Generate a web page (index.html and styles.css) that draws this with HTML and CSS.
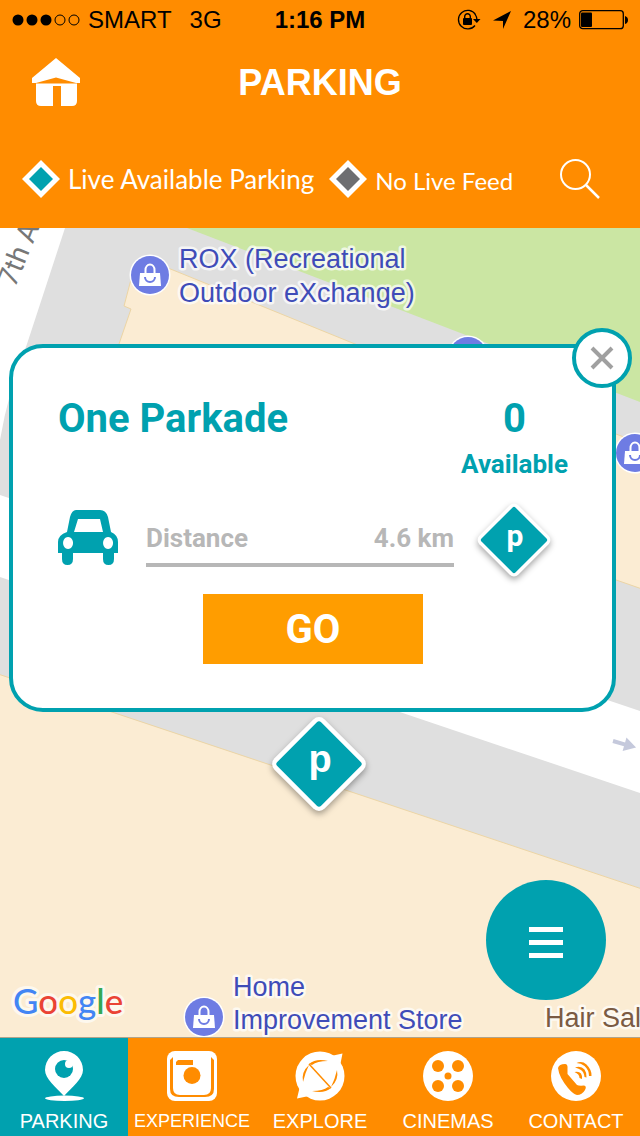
FILE: index.html
```
<!DOCTYPE html>
<html lang="en">
<head>
    <meta charset="UTF-8">
    <meta name="viewport" content="width=device-width, initial-scale=1.0">
    <title>Parking</title>
    <link rel="stylesheet" href="styles.css">
</head>
<body>

    <header class="app-header">
        <div class="status-bar">
            <div class="status-side">
                <svg class="signal" width="68" height="12" viewBox="0 0 68 12">
                    <circle cx="6" cy="6" r="5.500"/>
                    <circle cx="20" cy="6" r="5.500"/>
                    <circle cx="34" cy="6" r="5.500"/>
                    <circle class="signal-empty" cx="48" cy="6" r="5"/>
                    <circle class="signal-empty" cx="62" cy="6" r="5"/>
                </svg>
                <span class="carrier">SMART</span>
                <span>3G</span>
            </div>
            <span class="clock">1:16 PM</span>
            <div class="status-side status-right">
                <svg width="24" height="22" viewBox="0 0 24 22">
                    <path d="M18.500 5.500A9.300 9.300 0 1 0 18 16.500" fill="none" stroke="#000" stroke-width="1.300"/>
                    <path d="M18 5q2 3 2 6" fill="none" stroke="#000" stroke-width="1.300"/>
                    <path d="M16 10h7.500l-3.700 4z"/>
                    <rect x="6" y="9" width="9" height="7" rx="1"/>
                    <path d="M7.700 10V7.500a2.800 2.800 0 0 1 5.600 0V10" fill="none" stroke="#000" stroke-width="1.400"/>
                </svg>
                <svg width="18" height="18" viewBox="0 0 18 18">
                    <path d="M18 0L10 18V10L0 9.500z"/>
                </svg>
                <div class="battery">
                    <span>28%</span>
                    <svg width="49" height="20" viewBox="0 0 49 20">
                        <rect x=".7" y=".7" width="43.600" height="18" rx="3" fill="none" stroke="#000" stroke-width="1.300"/>
                        <rect x="2" y="2.500" width="11" height="14.500" rx="1"/>
                        <path d="M46 6q3 1 3 4t-3 4z"/>
                    </svg>
                </div>
            </div>
        </div>

        <div class="title-bar">
            <a class="home-link" href="#" aria-label="Home">
                <svg width="48" height="48" viewBox="0 0 48 48" fill="#fff">
                    <path d="M24 0L48 20V25H44L24 19.500L4 25H0V20z"/>
                    <path d="M4 25.500H45V43q0 5-5 5H29V28H21V48H9q-5 0-5-5z"/>
                </svg>
            </a>
            <h1 class="title">PARKING</h1>
        </div>

        <div class="legend">
            <div class="legend-item">
                <svg width="38" height="38" viewBox="0 0 38 38">
                    <path d="M19 0L38 19L19 38L0 19z" fill="#fff"/>
                    <path d="M19 7L31 19L19 31L7 19z" fill="#00a1af"/>
                </svg>
                <span>Live Available Parking</span>
            </div>
            <div class="legend-item">
                <svg width="38" height="38" viewBox="0 0 38 38">
                    <path d="M19 0L38 19L19 38L0 19z" fill="#fff"/>
                    <path d="M19 7L31 19L19 31L7 19z" fill="#6d6e71"/>
                </svg>
                <span class="legend-small">No Live Feed</span>
            </div>
            <button type="button" class="search-button" aria-label="Search">
                <svg width="40" height="40" viewBox="0 0 40 40" fill="none" stroke="#fff" stroke-width="2">
                    <circle cx="15.500" cy="15.500" r="14.500"/>
                    <path d="M26 26L39 39" stroke-width="2.500"/>
                </svg>
            </button>
        </div>
    </header>

    <main class="map">
        <svg class="map-canvas" viewBox="0 228 640 809" preserveAspectRatio="xMidYMid slice">
            <defs>
                <g id="shop">
                    <circle r="20.500" fill="#fff"/>
                    <circle r="19" fill="#6e7ce3"/>
                    <path d="M-10-2H10L11 11H-11z" fill="#fff"/>
                    <path d="M-4.500 0V-5a4.500 5.500 0 0 1 9 0V0" fill="none" stroke="#fff" stroke-width="2"/>
                    <path d="M-5 2a5 5 0 0 0 10 0" fill="none" stroke="#6e7ce3" stroke-width="2"/>
                </g>
            </defs>
            <rect y="228" width="640" height="809" fill="#dfdfdf"/>

            <!-- parks and buildings -->
            <path d="M187 228H640V402z" fill="#cbe6a3"/>
            <path class="building" d="M134 268L168 268L355 344L616 434L642 444V589L100 400L119 344L131 309L124 306z"/>
            <path class="building" d="M-2 674L642 889V1040H-2z"/>

            <!-- roads -->
            <path d="M0 228H65L27 344Q8 392 0 440z" fill="#fff"/>
            <path d="M0 495L640 711V793L0 577z" fill="#fff"/>
            <path d="M0-2H12V-7L24 0L12 7V2H0z" fill="#c5c9dc" transform="translate(613 741) rotate(16)"/>

            <text class="street" transform="translate(15 288) rotate(-68)">7th A</text>

            <use href="#shop" x="150" y="275"/>
            <use href="#shop" x="468" y="356"/>
            <use href="#shop" x="635" y="453"/>
            <use href="#shop" x="204" y="1017"/>
            <text class="place" x="179" y="268">ROX (Recreational</text>
            <text class="place" x="179" y="302">Outdoor eXchange)</text>
            <text class="place" x="233" y="996">Home</text>
            <text class="place" x="233" y="1029">Improvement Store</text>
            <text class="place place-brown" x="545" y="1027">Hair Sal</text>

            <text class="google" x="13" y="1014"><tspan fill="#4285f4">G</tspan><tspan fill="#ea4335">o</tspan><tspan fill="#fbbc05">o</tspan><tspan fill="#4285f4">g</tspan><tspan fill="#34a853">l</tspan><tspan fill="#ea4335">e</tspan></text>

            <g class="marker">
                <rect x="-35.500" y="-35.500" width="71" height="71" rx="8" fill="#fff" transform="translate(319 764) rotate(45)"/>
                <rect x="-31" y="-31" width="62" height="62" rx="3" fill="#00a1af" transform="translate(319 764) rotate(45)"/>
            </g>
            <text class="marker-letter" x="320" y="772" font-size="38">p</text>
        </svg>

        <section class="card">
            <button type="button" class="close-button" aria-label="Close">
                <svg width="24" height="24" viewBox="0 0 24 24" stroke="#a0a0a0" stroke-width="4">
                    <path d="M2 2L22 22M22 2L2 22"/>
                </svg>
            </button>

            <div class="card-head">
                <h2 class="card-title">One Parkade</h2>
                <div class="spots">
                    <div class="spots-count">0</div>
                    <div class="spots-label">Available</div>
                </div>
            </div>

            <div class="card-row">
                <svg width="60" height="64" viewBox="0 0 60 64">
                    <path fill="#00a1af" fill-rule="evenodd" d="M18 0H42Q48 0 50 7L53 22Q60 25 60 32V43H56V49Q56 55 50.500 55T45 49V43H15V49Q15 55 9.500 55T4 49V43H0V32Q0 25 9 22L12 7Q14 0 18 0zM20 9L16 22H45L42 9zM10 27a5 6 0 1 0 .1 0zM50 27a5 6 0 1 0 .1 0z"/>
                </svg>
                <div class="distance">
                    <span>Distance</span>
                    <span>4.6 km</span>
                </div>
                <svg class="card-marker" width="76" height="80" viewBox="0 0 76 80">
                    <g class="marker">
                        <rect x="-27.500" y="-27.500" width="55" height="55" rx="6" fill="#fff" transform="translate(38 38) rotate(45)"/>
                        <rect x="-24" y="-24" width="48" height="48" rx="2" fill="#00a1af" transform="translate(38 38) rotate(45)"/>
                    </g>
                    <text class="marker-letter" x="39" y="44" font-size="30">p</text>
                </svg>
            </div>

            <button type="button" class="go-button">GO</button>
        </section>

        <button type="button" class="menu-button" aria-label="Menu">
            <svg width="34" height="31" viewBox="0 0 34 31" fill="#fff">
                <path d="M0 0H34V5H0zM0 13H34V18H0zM0 26H34V31H0z"/>
            </svg>
        </button>
    </main>

    <nav class="tabs">
        <a class="tab active" href="#">
            <svg width="50" height="50" viewBox="0 0 50 50">
                <path d="M25 0A19 19 0 0 1 44 19C44 28 33 36 25 45C17 36 6 28 6 19A19 19 0 0 1 25 0z" fill="#fff"/>
                <ellipse cx="25.500" cy="47.300" rx="19.500" ry="2.700" fill="#fff"/>
                <circle cx="25" cy="18" r="9" fill="#00a1af"/>
                <circle cx="30" cy="13" r="4" fill="#fff"/>
            </svg>
            <span>PARKING</span>
        </a>
        <a class="tab" href="#">
            <svg width="50" height="50" viewBox="0 0 50 50">
                <rect width="50" height="50" rx="8" fill="#fff"/>
                <path d="M3 9L6 6V37Q6 44 13 44H37Q44 44 44 37V6L47 9V38Q47 46 38 46H12Q3 46 3 38z" fill="#ff8c00"/>
                <path d="M11 9H26V14H9V11z" fill="#ff8c00"/>
                <circle cx="25" cy="24.500" r="8.500" fill="#ff8c00"/>
            </svg>
            <span class="tab-long">EXPERIENCE</span>
        </a>
        <a class="tab" href="#">
            <svg width="50" height="50" viewBox="0 0 50 50">
                <circle cx="25" cy="25" r="24.500" fill="#fff"/>
                <path d="M36 5L47.500 2.500L45 15zM14 45L2 47.500L5 35z" fill="#fff"/>
                <path fill="#ff8c00" d="M8 31Q6 21 14 14Q10 22 8 31zM14 13Q21 7 33 10Q22 10 17 14zM42 19Q44 29 36 36Q40 28 42 19zM36 37Q29 43 17 40Q28 40 33 36z"/>
                <path d="M14 13L36 37" stroke="#ff8c00" stroke-width="1.500"/>
            </svg>
            <span>EXPLORE</span>
        </a>
        <a class="tab" href="#">
            <svg width="50" height="50" viewBox="0 0 50 50" fill="#ff8c00">
                <circle cx="25" cy="25" r="25" fill="#fff"/>
                <circle cx="15" cy="15" r="6"/>
                <circle cx="35" cy="15" r="6"/>
                <circle cx="15" cy="35" r="6"/>
                <circle cx="35" cy="35" r="6"/>
                <circle cx="25" cy="25" r="3.500"/>
            </svg>
            <span>CINEMAS</span>
        </a>
        <a class="tab" href="#">
            <svg width="50" height="50" viewBox="0 0 50 50">
                <circle cx="25" cy="25" r="25" fill="#fff"/>
                <path fill="#ff8c00" d="M7 17Q8 13 14 13Q17 13 16.500 18L16.500 23L26 34Q28 35 33 34.500Q36 35 34 39Q31 44 26 44Q22 43 17 37Q8 26 7 17z"/>
                <path fill="#ff8c00" d="M25.500 12Q31 9.500 35.500 13.500Q41 19 40.500 25L38 25Q38 19 33.500 15Q30 12 25.500 12zM24 16.500Q30 14.500 33.500 18.500Q36 22 35.500 26.500L33.500 26Q33 21 30 19Q27 17 24 16.500zM23.500 21Q28 20 30 22.500Q31.500 25 31 28L28.500 27Q28.500 23 23.500 21z"/>
            </svg>
            <span>CONTACT</span>
        </a>
    </nav>

</body>
</html>
```
FILE: styles.css
```
:root {
    --orange: #ff8c00;
    --teal: #00a1af;
    --grey: #b7b7b7;
}
* { box-sizing: border-box; margin: 0; padding: 0; }
body {
    font-family: "Liberation Sans", Arial, sans-serif;
    display: flex;
    flex-direction: column;
    min-height: 100vh;
}
svg { display: block; flex-shrink: 0; }
a { color: inherit; text-decoration: none; }
button { border: 0; background: none; font-family: inherit; cursor: pointer; }

/* header */
.app-header {
    background-color: var(--orange);
    color: #fff;
}
.status-bar {
    display: flex;
    align-items: center;
    height: 40px;
    padding: 0 12px;
    font-size: 24px;
    color: #000;
}
.status-side {
    display: flex;
    align-items: center;
    flex: 1;
    gap: 8px;
}
.status-right { justify-content: flex-end; gap: 12px; }
.battery { display: flex; align-items: center; gap: 8px; }
.carrier { margin-right: 10px; }
.signal-empty { fill: none; stroke: #000; }
.clock { font-weight: bold; }
.title-bar {
    display: grid;
    grid-template-columns: 1fr auto 1fr;
    align-items: center;
    height: 84px;
    padding: 0 32px;
}
.home-link { justify-self: start; }
.title { padding-top: 2px; font-size: 36px; font-weight: bold; }
.legend {
    display: flex;
    align-items: center;
    gap: 15px;
    height: 104px;
    padding: 6px 40px 0 22px;
    font-family: Lato, sans-serif;
    font-size: 26px;
}
.legend-item {
    display: flex;
    align-items: center;
    gap: 8px;
    white-space: nowrap;
}
.legend-small { padding-top: 2px; font-size: 24px; }
.search-button { margin-left: auto; }

/* map */
.map {
    position: relative;
    flex: 1;
    padding: 116px 24px 116px 9px;
    overflow: hidden;
}
.map-canvas {
    position: absolute;
    top: 0;
    left: 0;
    width: 100%;
    height: 100%;
}
.building { fill: #fbecd3; stroke: #ecd5a5; stroke-width: 1; }
.street { font-family: Roboto, sans-serif; font-size: 28px; fill: #777; }
.place {
    font-size: 27px;
    fill: #3f4cb8;
    stroke: #fff;
    stroke-opacity: 0.7;
    stroke-width: 5px;
    stroke-linejoin: round;
    paint-order: stroke;
}
.place-brown { fill: #7b5b43; }
.google {
    font-family: Lato, sans-serif;
    font-size: 35px;
    font-weight: 500;
    stroke: #fdf8ee;
    stroke-width: 6px;
    stroke-linejoin: round;
    paint-order: stroke;
}
.marker { filter: drop-shadow(0 3px 3px rgba(0, 0, 0, 0.35)); }
.marker-letter { font-weight: bold; fill: #fff; text-anchor: middle; }

/* parking card */
.card {
    position: relative;
    padding: 44px 44px 44px 45px;
    border: 4px solid var(--teal);
    border-radius: 34px;
    background-color: #fff;
    font-family: Roboto, sans-serif;
    font-weight: bold;
}
.close-button {
    position: absolute;
    top: -20px;
    right: -20px;
    display: flex;
    align-items: center;
    justify-content: center;
    width: 60px;
    height: 60px;
    border: 4px solid var(--teal);
    border-radius: 50%;
    background-color: #fff;
}
.card-head {
    display: flex;
    justify-content: space-between;
    color: var(--teal);
}
.card-title, .spots-count { font-size: 40px; line-height: 54px; }
.spots { text-align: center; }
.spots-label { font-size: 26px; line-height: 36px; }
.card-row {
    display: flex;
    align-items: center;
    margin-top: 20px;
    padding-right: 16px;
}
.card-marker { overflow: visible; }
.distance {
    display: flex;
    flex: 1;
    justify-content: space-between;
    margin: 0 22px 0 28px;
    padding-bottom: 4px;
    border-bottom: 4px solid var(--grey);
    font-size: 26px;
    line-height: 42px;
    color: var(--grey);
}
.go-button {
    display: block;
    width: 220px;
    height: 70px;
    margin: 10px auto 0;
    background-color: #ff9d00;
    color: #fff;
    font-size: 40px;
    font-weight: bold;
}
.card .go-button { margin-top: 12px; }
.menu-button {
    position: absolute;
    right: 34px;
    bottom: 37px;
    display: flex;
    align-items: center;
    justify-content: center;
    width: 120px;
    height: 120px;
    padding-top: 4px;
    border-radius: 50%;
    background-color: var(--teal);
}

/* bottom tabs */
.tabs {
    display: grid;
    grid-template-columns: repeat(5, 1fr);
    border-top: 1px solid #b0a48c;
    background-color: var(--orange);
    color: #fff;
    font-size: 20px;
}
.tab {
    display: flex;
    flex-direction: column;
    align-items: center;
    gap: 8px;
    padding: 13px 0 3px;
    line-height: 24px;
}
.tab.active { background-color: var(--teal); }
.tab-long { font-size: 18px; }
```
